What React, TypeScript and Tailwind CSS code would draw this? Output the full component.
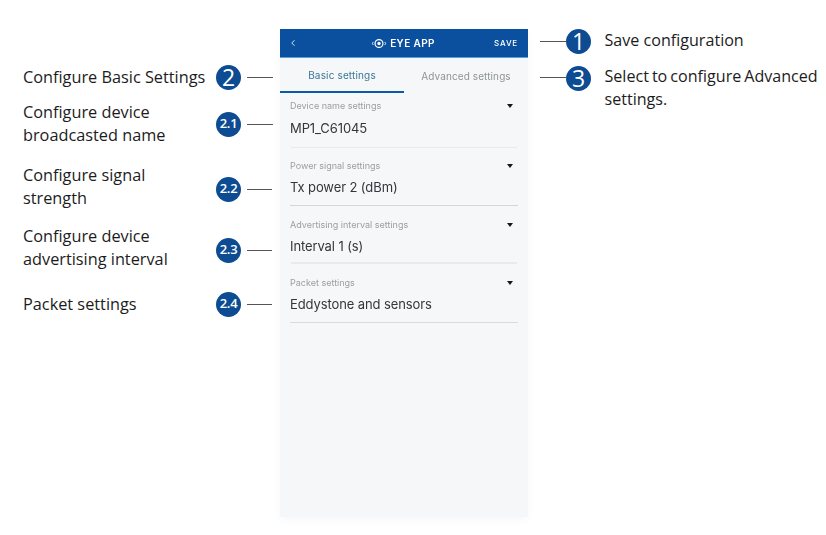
import React from "react";
import { ChevronLeft } from "lucide-react";

function Badge({ label, small, mt = 0 }: { label: string; small?: boolean; mt?: number }) {
  return (
    <div
      className={`flex h-[25px] w-[25px] shrink-0 items-center justify-center rounded-full bg-[#0d4c92] text-white ${
        small ? "text-[13px] font-semibold tracking-[-0.3px]" : "text-[23px]"
      }`}
      style={{ marginTop: mt }}
    >
      {label}
    </div>
  );
}

function LeftRow({ h, lines, badge, small, lineW = 26, lift = 0 }: { h: number; lines: string[]; badge: string; small?: boolean; lineW?: number; lift?: number }) {
  return (
    <div className="flex items-center" style={{ height: h }}>
      <div className="w-[193px] text-[16.3px] leading-[23px] text-[#1c1c1c]" style={{ marginTop: -lift }}>
        {lines.map((l) => (
          <div key={l}>{l}</div>
        ))}
      </div>
      <Badge label={badge} small={small} />
      <div className="ml-[6px] h-px bg-[#555]" style={{ width: lineW }} />
    </div>
  );
}

function RightRow({ badge, lines, h, badgeMt = 0, tight }: { badge: string; lines: string[]; h: number; badgeMt?: number; tight?: boolean }) {
  return (
    <div className="flex items-start" style={{ height: h }}>
      <div className="mt-[12px] h-px w-[26px] bg-[#555]" />
      <Badge label={badge} mt={badgeMt} />
      <div className={`ml-[13.5px] text-[16.1px] leading-[23px] text-[#1c1c1c] ${tight ? "[word-spacing:-1.2px]" : ""}`}>
        {lines.map((l) => (
          <div key={l} className="whitespace-nowrap">
            {l}
          </div>
        ))}
      </div>
    </div>
  );
}

function Setting({ label, value, h, labelMt, valueMt = 6, divider = "h-px bg-[#dcdfe2]" }: { label: string; value: string; h: number; labelMt: number; valueMt?: number; divider?: string }) {
  return (
    <div className="flex flex-col px-[10px]" style={{ height: h }}>
      <div className="flex items-center justify-between pr-[5px]" style={{ marginTop: labelMt }}>
        <span className="text-[9px] leading-[12px] text-[#9a9fa4]">{label}</span>
        <svg width="6" height="4" viewBox="0 0 6 4">
          <polygon points="0,0 6,0 3,4" fill="#15181c" />
        </svg>
      </div>
      <div className="text-[13px] leading-[18px] tracking-[-0.1px] text-[#33373b]" style={{ marginTop: valueMt }}>{value}</div>
      <div className={`mt-auto ${divider}`} />
    </div>
  );
}

export default function App() {
  return (
    <div className="flex h-[535px] w-[826px] overflow-hidden bg-white font-['Open_Sans',sans-serif]">
      <div className="w-[280px] shrink-0 pl-[23px] pt-[62px]">
        <LeftRow h={30} lines={["Configure Basic Settings"]} badge="2" />
        <div className="h-[9px]" />
        <LeftRow h={46} lines={["Configure device", "broadcasted name"]} badge="2.1" small />
        <div className="h-[19px]" />
        <LeftRow h={46} lines={["Configure signal", "strength"]} badge="2.2" small lineW={25} lift={4} />
        <div className="h-[15px]" />
        <LeftRow h={46} lines={["Configure device", "advertising interval"]} badge="2.3" small lineW={25} lift={4} />
        <div className="h-[8px]" />
        <LeftRow h={46} lines={["Packet settings"]} badge="2.4" small lineW={25} />
      </div>

      <div className="mt-[29px] flex h-[488px] w-[248px] shrink-0 flex-col bg-[#f5f7f9] font-['Inter',sans-serif] shadow-[0_3px_6px_rgba(245,247,249,0.9)] blur-[0.3px]">
        <div className="flex h-[29px] shrink-0 items-center justify-between border-b border-[#5f9bd6] bg-[#0a509f] pl-[8px] pr-[10px] text-white">
          <ChevronLeft size={10} strokeWidth={2} />
          <div className="ml-[14px] flex items-center gap-[3px] text-[10px] font-semibold tracking-[0.4px]">
            <svg width="16" height="11" viewBox="0 0 14 10" fill="none" stroke="white">
              <circle cx="7" cy="5" r="3.6" strokeWidth="1.1" />
              <circle cx="7" cy="5" r="1.5" fill="white" stroke="none" />
              <path d="M1.8 3.6 L1 5 L1.8 6.4 M12.2 3.6 L13 5 L12.2 6.4" strokeWidth="0.8" />
            </svg>
            EYE APP
          </div>
          <span className="text-[8px] font-medium tracking-[0.8px]">SAVE</span>
        </div>
        <div className="flex h-[35px] shrink-0 text-[10px]">
          <div className="flex w-[124px] items-center justify-center border-b-2 border-[#0a5aa5] pt-[2px] tracking-[0.15px] text-[#3a7796]">Basic settings</div>
          <div className="flex flex-1 items-center justify-center pt-[1px] tracking-[0.1px] text-[#8f9497]">Advanced settings</div>
        </div>
        <Setting label="Device name settings" value="MP1_C61045" h={55} labelMt={7} valueMt={7} divider="mx-[1px] h-px bg-[#e8eaed]" />
        <Setting label="Power signal settings" value="Tx power 2 (dBm)" h={58} labelMt={12} divider="h-px bg-[#d4d7da]" />
        <Setting label="Advertising interval settings" value="Interval 1 (s)" h={58} labelMt={13} valueMt={6} divider="mx-[1px] h-[2px] bg-[#e8eaed]" />
        <Setting label="Packet settings" value="Eddystone and sensors" h={59} labelMt={13} valueMt={6} divider="h-px bg-[#d9dcdf]" />
      </div>

      <div className="pl-[12px] pt-[29px]">
        <RightRow badge="1" lines={["Save configuration"]} h={36} />
        <RightRow badge="3" lines={["Select to configure Advanced", "settings."]} h={50} badgeMt={1} tight />
      </div>
    </div>
  );
}
